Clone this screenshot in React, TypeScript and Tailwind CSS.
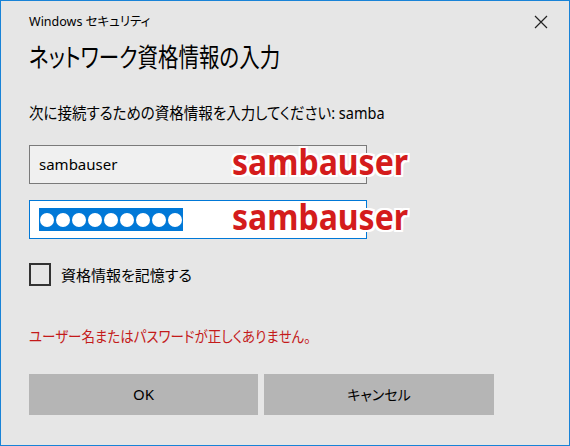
const jp = "font-['Noto_Sans','Noto_Sans_CJK_JP',sans-serif] [font-feature-settings:'palt']";

const outline =
  "[text-shadow:2px_0_0_#fff,-2px_0_0_#fff,0_2px_0_#fff,0_-2px_0_#fff,2px_2px_0_#fff,-2px_-2px_0_#fff,2px_-2px_0_#fff,-2px_2px_0_#fff]";

const Note = ({ text }: { text: string }) => (
  <span
    className={`absolute left-[203px] top-[-1px] text-[32px] leading-[40px] font-bold text-[#d41c1c] origin-bottom scale-y-[1.12] font-['Noto_Sans',sans-serif] ${outline}`}
  >
    {text}
  </span>
);

export default function App() {
  return (
    <div className={`w-[570px] h-[446px] border border-[#1883d7] bg-[#e6e6e6] text-black ${jp}`}>
      {/* title bar */}
      <div className="flex items-center justify-between pl-[28px] pr-[21px] pt-[9px] h-[32px]">
        <span className="text-[12.5px] leading-[20px]">Windows セキュリティ</span>
        <svg width="14" height="14" viewBox="0 0 14 14" className="mt-[1px]">
          <path d="M1 1L13 13M13 1L1 13" stroke="#222" strokeWidth="1.2" fill="none" />
        </svg>
      </div>

      <div className="pl-[28px] pr-[28px]">
        <h1 className="text-[20.5px] leading-[30px] mt-[9px] font-normal origin-left scale-y-[1.25]">
          ネットワーク資格情報の入力
        </h1>

        <p className="text-[14.5px] leading-[22px] mt-[30px] origin-left scale-y-[1.08]">
          次に接続するための資格情報を入力してください: samba
        </p>

        <div className="relative mt-[21px] w-[338px]">
          <div className="h-[39px] border border-[#7a7a7a] bg-[#f0f0f0] flex items-center pl-[9px] text-[15px]">
            sambauser
          </div>
          <Note text="sambauser" />
        </div>

        <div className="relative mt-[16px] w-[338px]">
          <div className="h-[39px] border border-[#0078d7] bg-white flex items-center pl-[9px]">
            <span className="flex items-center gap-[2px] bg-[#0078d7] h-[23px] px-[1px]">
              {Array.from({ length: 9 }).map((_, i) => (
                <span key={i} className="w-[14px] h-[14px] rounded-full bg-white" />
              ))}
            </span>
          </div>
          <Note text="sambauser" />
        </div>

        <label className="flex items-center gap-[10px] mt-[24px]">
          <span className="w-[22px] h-[23px] border-2 border-[#333] box-border" />
          <span className="text-[15px] leading-[22px]">資格情報を記憶する</span>
        </label>

        <p className="text-[13.5px] leading-[22px] mt-[39px] text-[#c41a1a] origin-left scale-y-[1.12]">
          ユーザー名またはパスワードが正しくありません。
        </p>

        <div className="flex gap-[6px] mt-[27px]">
          <button className="w-[229px] h-[41px] bg-[#b5b5b5] text-[15px]">OK</button>
          <button className="w-[230px] h-[41px] bg-[#b5b5b5] text-[14px]">キャンセル</button>
        </div>
      </div>
    </div>
  );
}
